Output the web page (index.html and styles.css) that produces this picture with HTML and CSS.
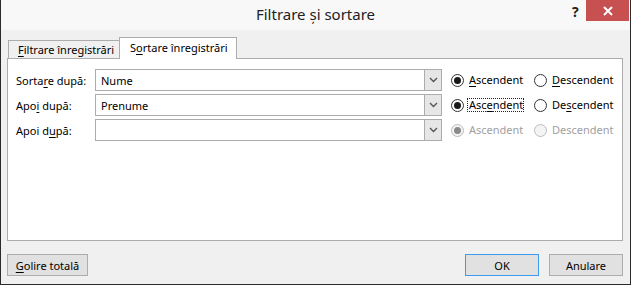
FILE: index.html
```html
<!DOCTYPE html>
<html lang="ro">
<head>
    <meta charset="UTF-8">
    <title>Filtrare și sortare</title>
    <link rel="stylesheet" href="styles.css">
</head>
<body>
    <div class="window">
        <div class="titlebar">
            <div class="title">Filtrare și sortare</div>
            <div class="help">?</div>
            <div class="close">
                <svg width="10" height="10" viewBox="0 0 10 10"><path d="M1 1 L9 9 M9 1 L1 9" stroke="#fff" stroke-width="2"/></svg>
            </div>
        </div>

        <div class="tabs">
            <div class="tab first"><u>F</u>iltrare înregistrări</div>
            <div class="tab active">S<u>o</u>rtare înregistrări</div>
        </div>

        <div class="panel">
            <div class="sort-row">
                <span class="label">Sorta<u>r</u>e după:</span>
                <div class="combo">
                    <span class="combo-text">Nume</span>
                    <span class="combo-btn"><svg width="9" height="6" viewBox="0 0 9 6"><path d="M1 1 L4.5 4.5 L8 1" fill="none" stroke="#555" stroke-width="1.4"/></svg></span>
                </div>
                <span class="radio checked"><span class="dot"></span></span>
                <span class="opt asc"><u>A</u>scendent</span>
                <span class="radio"></span>
                <span class="opt"><u>D</u>escendent</span>
            </div>
            <div class="sort-row">
                <span class="label">Apo<u>i</u> după:</span>
                <div class="combo">
                    <span class="combo-text">Prenume</span>
                    <span class="combo-btn"><svg width="9" height="6" viewBox="0 0 9 6"><path d="M1 1 L4.5 4.5 L8 1" fill="none" stroke="#555" stroke-width="1.4"/></svg></span>
                </div>
                <span class="radio checked"><span class="dot"></span></span>
                <span class="opt asc focus">Asc<u>e</u>ndent</span>
                <span class="radio"></span>
                <span class="opt">De<u>s</u>cendent</span>
            </div>
            <div class="sort-row disabled">
                <span class="label">Apoi d<u>u</u>pă:</span>
                <div class="combo">
                    <span class="combo-text"></span>
                    <span class="combo-btn"><svg width="9" height="6" viewBox="0 0 9 6"><path d="M1 1 L4.5 4.5 L8 1" fill="none" stroke="#555" stroke-width="1.4"/></svg></span>
                </div>
                <span class="radio checked"><span class="dot"></span></span>
                <span class="opt asc">Ascendent</span>
                <span class="radio"></span>
                <span class="opt">Descendent</span>
            </div>
        </div>

        <div class="buttons">
            <button class="btn wide"><u>G</u>olire totală</button>
            <div class="spacer"></div>
            <button class="btn default">OK</button>
            <button class="btn">Anulare</button>
        </div>
    </div>
</body>
</html>
```

FILE: styles.css
```css
body {
    margin: 0;
    font-family: "Noto Sans", "Open Sans", sans-serif;
    font-size: 11px;
    color: #000;
}
u {
    text-decoration: underline;
    text-underline-offset: 2px;
}
.window {
    width: 631px;
    height: 285px;
    box-sizing: border-box;
    background-color: #f0f0f0;
    border: 1px solid #2b2b2b;
    border-top: none;
    display: flex;
    flex-direction: column;
}
.titlebar {
    height: 30px;
    background-color: #f8f8f8;
    display: flex;
    align-items: flex-start;
    position: relative;
}
.title {
    position: absolute;
    left: 0;
    right: 0;
    top: 4px;
    text-align: center;
    font-size: 15px;
    color: #222;
}
.help {
    margin-left: auto;
    margin-top: 2px;
    width: 10px;
    font-size: 14px;
    font-weight: bold;
    color: #222;
}
.close {
    width: 43px;
    height: 21px;
    margin-right: 1px;
    margin-left: 4px;
    background-color: #c75050;
    display: flex;
    align-items: center;
    justify-content: center;
}
.tabs {
    display: flex;
    align-items: flex-end;
    padding-left: 7px;
    margin-top: 8px;
    height: 20px;
    position: relative;
    z-index: 1;
}
.tab {
    height: 18px;
    box-sizing: border-box;
    border: 1px solid #acacac;
    border-bottom: none;
    background-color: #f0f0f0;
    line-height: 17px;
    white-space: nowrap;
}
.tab.first {
    width: 112px;
    padding-left: 9px;
}
.tab.active {
    width: 118px;
    height: 22px;
    margin-bottom: -1px;
    margin-left: -1px;
    background-color: #fff;
    padding-left: 10px;
    line-height: 20px;
}
.panel {
    margin: 0 7px 0 6px;
    height: 183px;
    box-sizing: border-box;
    background-color: #fff;
    border: 1px solid #acacac;
    padding: 10px 0 0 8px;
    display: flex;
    flex-direction: column;
    gap: 3px;
}
.sort-row {
    display: flex;
    align-items: center;
    height: 22px;
}
.sort-row > * {
    flex-shrink: 0;
}
.label {
    width: 79px;
}
.combo {
    width: 347px;
    height: 22px;
    box-sizing: border-box;
    border: 1px solid #acacac;
    display: flex;
    align-items: center;
}
.combo-text {
    flex: 1;
    padding-left: 5px;
}
.combo-btn {
    width: 17px;
    height: 20px;
    box-sizing: border-box;
    background-color: #e6e6e6;
    border-left: 1px solid #acacac;
    display: flex;
    align-items: center;
    justify-content: center;
}
.radio {
    width: 13px;
    height: 13px;
    box-sizing: border-box;
    border-radius: 50%;
    border: 1px solid #333;
    background-color: #fff;
    display: flex;
    align-items: center;
    justify-content: center;
    margin-left: 9px;
}
.radio .dot {
    width: 7px;
    height: 7px;
    border-radius: 50%;
    background-color: #1a1a1a;
}
.opt {
    margin-left: 3px;
    padding: 0 1px;
    line-height: 12px;
    border: 1px dotted transparent;
    white-space: nowrap;
}
.opt.asc {
    width: 57px;
    box-sizing: border-box;
    margin-right: 1px;
}
.opt.focus {
    border-color: #222;
}
.disabled .opt {
    color: #a0a0a0;
}
.disabled .radio {
    border-color: #bcbcbc;
    background-color: #f4f4f4;
}
.disabled .radio .dot {
    background-color: #8a8a8a;
}
.buttons {
    display: flex;
    gap: 10px;
    padding: 13px 7px 0 6px;
}
.spacer {
    flex: 1;
}
.btn {
    height: 22px;
    width: 74px;
    padding: 0;
    font-family: inherit;
    font-size: 11px;
    color: #000;
    background-color: #e1e1e1;
    border: 1px solid #adadad;
}
.btn.wide {
    width: 81px;
}
.btn.default {
    border-color: #3c9aef;
}
```
